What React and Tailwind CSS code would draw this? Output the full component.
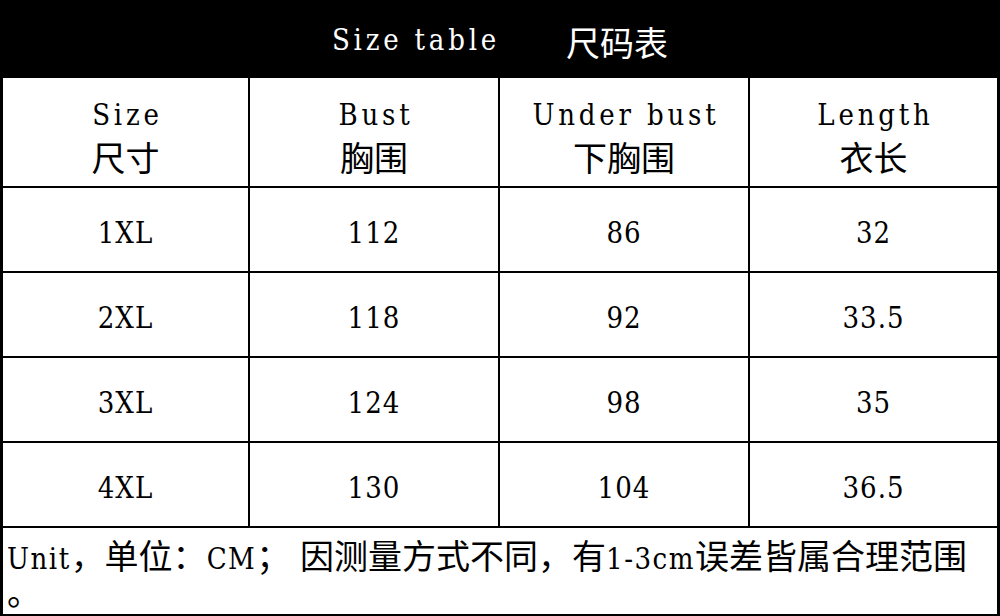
import React from "react";

const CJK = /([\u3000-\u303f\u4e00-\u9fff\uff00-\uffef]+)/;

const spacing = {
  word: "tracking-[3.8px]",
  note: "tracking-[1.5px]",
  num: "tracking-[1px]",
};

function Latin({ children, kind = "word" }) {
  return (
    <span
      className={`whitespace-pre font-['DejaVu_Serif_Condensed','DejaVu_Serif',serif] font-stretch-condensed text-[29px] ${spacing[kind]}`}
    >
      {children}
    </span>
  );
}

function Han({ children }) {
  return <span className="font-['Noto_Sans_CJK_SC',sans-serif] text-[34px]">{children}</span>;
}

function Mixed({ text }) {
  return text.split(CJK).map((part, i) =>
    CJK.test(part) ? (
      <Han key={i}>{part}</Han>
    ) : part ? (
      <Latin key={i} kind="note">
        {part}
      </Latin>
    ) : null
  );
}

const headers = [
  ["Size", "尺寸"],
  ["Bust", "胸围"],
  ["Under bust", "下胸围"],
  ["Length", "衣长"],
];

const rows = [
  ["1XL", "112", "86", "32"],
  ["2XL", "118", "92", "33.5"],
  ["3XL", "124", "98", "35"],
  ["4XL", "130", "104", "36.5"],
];

const grid = "grid grid-cols-[247px_250px_250px_1fr] border-b-2 border-black";

export default function App() {
  return (
    <div className="flex h-[616px] w-[1000px] flex-col bg-white text-black">
      <div className="flex h-[78px] shrink-0 items-center justify-center gap-[66px] bg-black pt-[4px] text-white">
        <Latin>Size table</Latin>
        <Han>尺码表</Han>
      </div>

      <div className="flex flex-1 flex-col border-x-[3px] border-b-[3px] border-black">
        <div className={`${grid} h-[110px] shrink-0`}>
          {headers.map(([en, zh], i) => (
            <div
              key={en}
              className={`flex flex-col items-center justify-center pt-[8px] leading-[37px] ${i < 3 ? "border-r-2 border-black" : ""}`}
            >
              <span className="pl-[4px]">
                <Latin>{en}</Latin>
              </span>
              <Han>{zh}</Han>
            </div>
          ))}
        </div>

        {rows.map((row) => (
          <div key={row[0]} className={`${grid} h-[85px] shrink-0`}>
            {row.map((cell, i) => (
              <div
                key={i}
                className={`flex items-center justify-center pt-[8px] ${i < 3 ? "border-r-2 border-black" : ""}`}
              >
                <Latin kind="num">{cell}</Latin>
              </div>
            ))}
          </div>
        ))}

        <div className="flex-1 pl-[4px] pt-[6px]">
          <div className="h-[42px] leading-[42px]">
            <Mixed text="Unit，单位：CM； 因测量方式不同，有1-3cm误差皆属合理范围" />
          </div>
          <div className="leading-[30px]">
            <Han>。</Han>
          </div>
        </div>
      </div>
    </div>
  );
}
